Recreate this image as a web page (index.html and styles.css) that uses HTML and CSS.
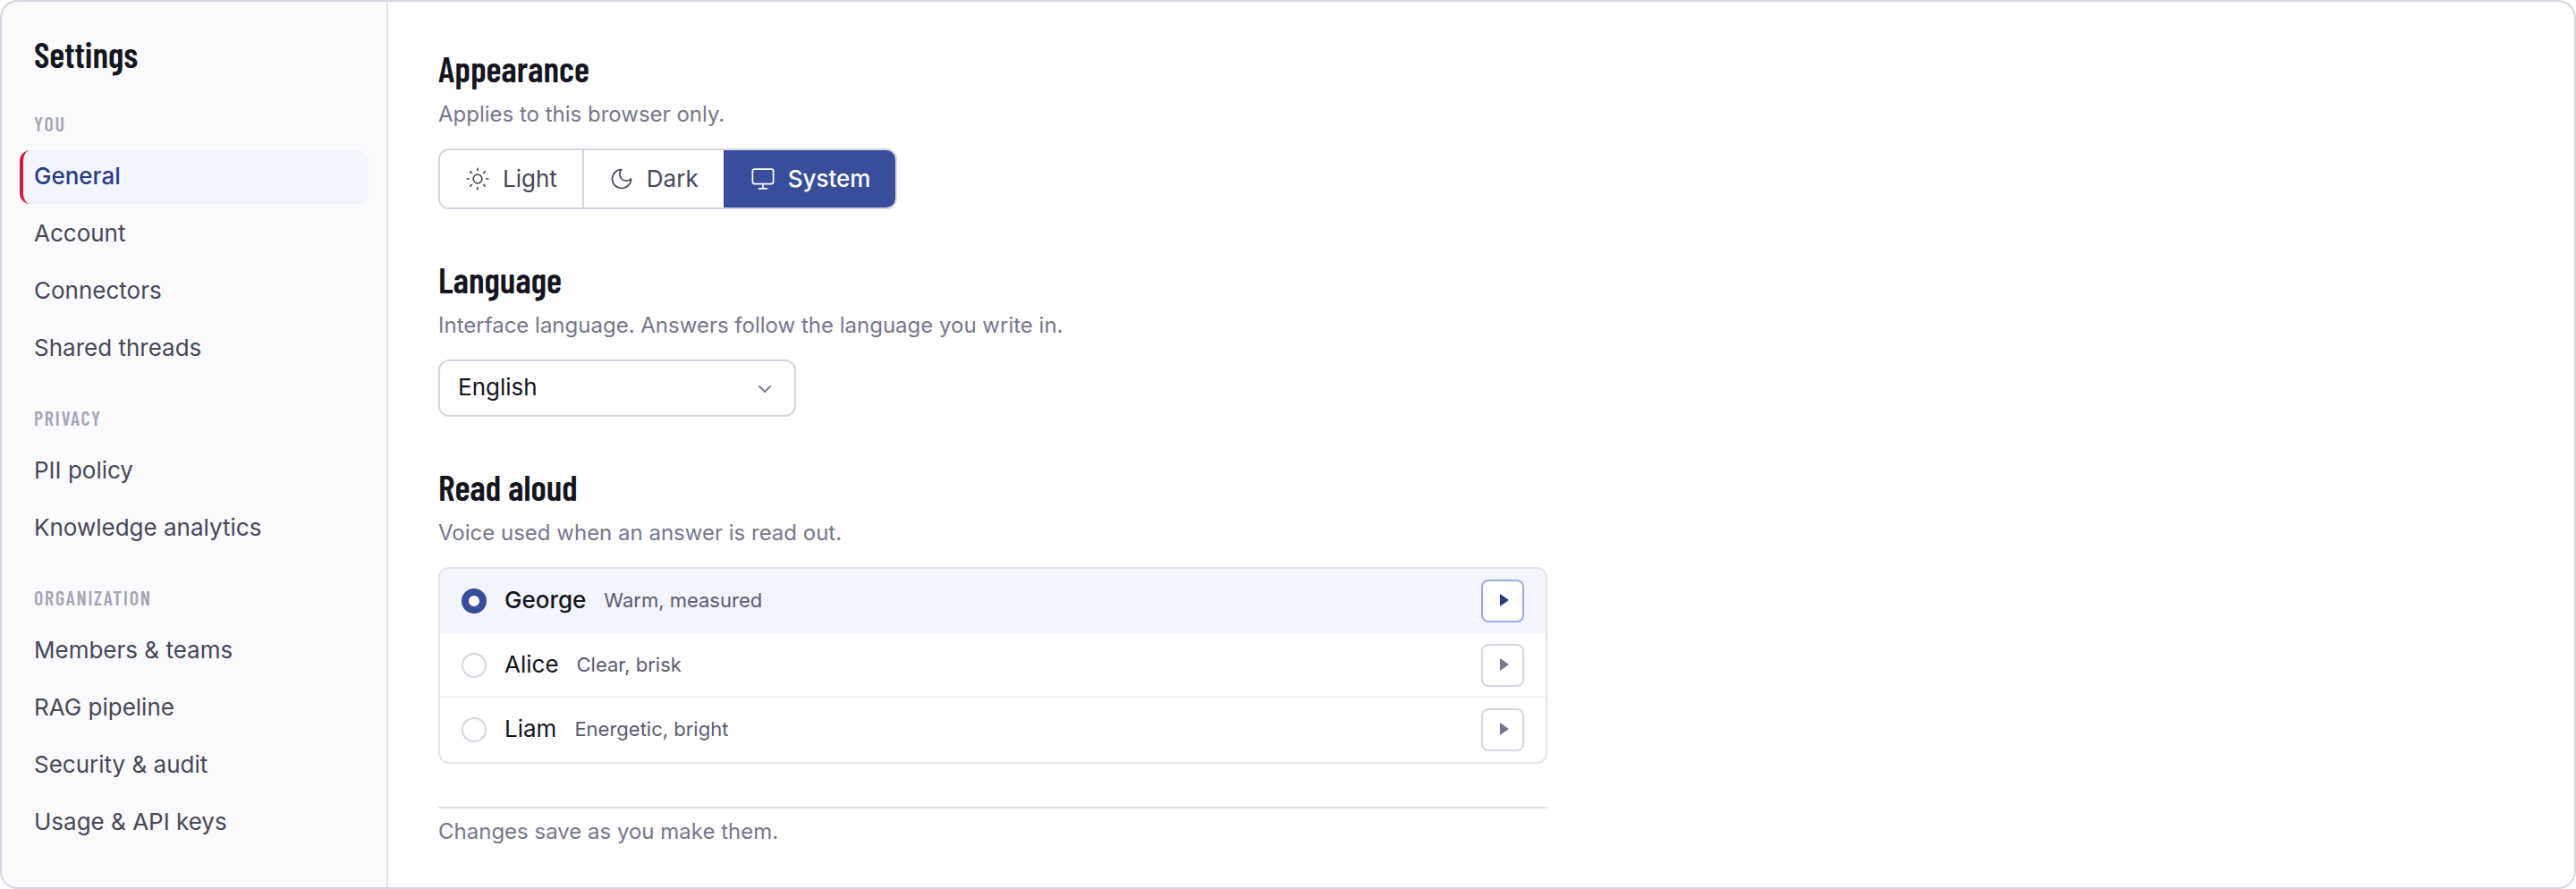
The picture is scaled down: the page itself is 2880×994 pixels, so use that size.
FILE: index.html
```html
<!DOCTYPE html>
<html lang="en">
<head>
<meta charset="utf-8">
<title>Settings</title>
<link rel="stylesheet" href="styles.css">
</head>
<body>
<div class="panel">
  <nav class="sidebar" aria-label="Settings">
    <h1 class="title">Settings</h1>
    <section class="group">
      <h2 class="group-label">YOU</h2>
      <a class="item item-active" href="#general" aria-current="page">General</a>
      <a class="item" href="#account">Account</a>
      <a class="item" href="#connectors">Connectors</a>
      <a class="item" href="#threads">Shared threads</a>
    </section>
    <section class="group">
      <h2 class="group-label">PRIVACY</h2>
      <a class="item" href="#pii">PII policy</a>
      <a class="item" href="#analytics">Knowledge analytics</a>
    </section>
    <section class="group">
      <h2 class="group-label">ORGANIZATION</h2>
      <a class="item" href="#members">Members &amp; teams</a>
      <a class="item" href="#rag">RAG pipeline</a>
      <a class="item" href="#security">Security &amp; audit</a>
      <a class="item" href="#usage">Usage &amp; API keys</a>
    </section>
  </nav>
  <main class="content">
    <section class="block">
      <h2 class="heading">Appearance</h2>
      <p class="hint">Applies to this browser only.</p>
      <div class="segments" role="group" aria-label="Appearance">
        <button class="segment" type="button" aria-pressed="false">
          <svg class="icon" viewBox="0 0 28 28" aria-hidden="true"><circle cx="14" cy="14" r="4.800"/><path d="M14 2.300v2M14 23.700v2M2.300 14h2M23.700 14h2M5.800 5.800l1.500 1.500M20.700 20.700l1.500 1.500M5.800 22.200l1.500-1.500M20.700 7.300l1.500-1.500"/></svg>
          Light
        </button>
        <button class="segment" type="button" aria-pressed="false">
          <svg class="icon" viewBox="0 0 28 28" aria-hidden="true"><path d="M14 3.500a7 7 0 0 0 10.500 10.500 10.500 10.500 0 1 1-10.500-10.500z"/></svg>
          Dark
        </button>
        <button class="segment segment-on" type="button" aria-pressed="true">
          <svg class="icon" viewBox="0 0 28 28" aria-hidden="true"><rect x="2.400" y="3.200" width="23.200" height="16.400" rx="2.300"/><path d="M14 19.600v5.200M9.500 24.800h9"/></svg>
          System
        </button>
      </div>
    </section>
    <section class="block">
      <h2 class="heading"><label for="language">Language</label></h2>
      <p class="hint">Interface language. Answers follow the language you write in.</p>
      <div class="picker">
        <select class="select" id="language"><option>English</option></select>
        <svg class="chevron" viewBox="0 0 24 24" aria-hidden="true"><path d="M5 10l6 6 6-6"/></svg>
      </div>
    </section>
    <section class="block">
      <h2 class="heading">Read aloud</h2>
      <p class="hint">Voice used when an answer is read out.</p>
      <div class="voices" role="radiogroup" aria-label="Read aloud">
        <div class="voice voice-on">
          <input class="radio" type="radio" name="voice" id="george" checked>
          <label class="voice-label" for="george"><span class="name">George</span><span class="note">Warm, measured</span></label>
          <button class="play" type="button" aria-label="Play George"><svg class="play-icon" viewBox="0 0 10 14" aria-hidden="true"><path d="M0 0l10 7L0 14z"/></svg></button>
        </div>
        <div class="voice">
          <input class="radio" type="radio" name="voice" id="alice">
          <label class="voice-label" for="alice"><span class="name">Alice</span><span class="note">Clear, brisk</span></label>
          <button class="play" type="button" aria-label="Play Alice"><svg class="play-icon" viewBox="0 0 10 14" aria-hidden="true"><path d="M0 0l10 7L0 14z"/></svg></button>
        </div>
        <div class="voice">
          <input class="radio" type="radio" name="voice" id="liam">
          <label class="voice-label" for="liam"><span class="name">Liam</span><span class="note">Energetic, bright</span></label>
          <button class="play" type="button" aria-label="Play Liam"><svg class="play-icon" viewBox="0 0 10 14" aria-hidden="true"><path d="M0 0l10 7L0 14z"/></svg></button>
        </div>
      </div>
    </section>
    <footer class="footnote">Changes save as you make them.</footer>
  </main>
</div>
</body>
</html>
```

FILE: styles.css
```css
* { box-sizing: border-box; }

body {
  margin: 0;
  background: #fff;
  color: #14151f;
  font: 26px/36px Inter, "Liberation Sans", sans-serif;
}

h1, h2, p { margin: 0; }

button, select { font: inherit; }

.panel {
  display: flex;
  min-height: 100vh;
  border: 2px solid #d6d5e2;
  border-radius: 20px;
  overflow: hidden;
}

.sidebar {
  flex: none;
  width: 432px;
  padding: 34px 20px;
  border-right: 2px solid #e4e4ed;
  background: #fafbfd;
}

.title, .heading, .group-label {
  font-family: "Barlow Condensed", "Liberation Sans Narrow", Roboto, sans-serif;
  font-weight: 600;
}

.title, .heading {
  font-size: 40px;
  line-height: 48px;
}

.title {
  padding: 0 16px 7px;
}

.group {
  display: flex;
  flex-direction: column;
  gap: 4px;
  margin-top: 33px;
}

.group-label {
  padding-left: 16px;
  margin-bottom: 12px;
  color: #a6a5b8;
  font-size: 22px;
  line-height: 28px;
  letter-spacing: 0.08em;
}

.item {
  padding: 11px 12px 13px;
  border-left: 4px solid transparent;
  border-radius: 12px;
  color: #474659;
  text-decoration: none;
}

.item-active {
  border-left-color: #d01c3f;
  background: #f2f5fd;
  color: #2c3c84;
  font-weight: 500;
}

.content {
  flex: 1;
  padding: 50px 56px 36px;
}

.block {
  max-width: 1240px;
  margin-bottom: 54px;
}

.block:last-of-type { margin-bottom: 48px; }

.hint {
  margin: 10px 0 20px;
  font-size: 24px;
  color: #77768d;
}

.segments {
  display: inline-flex;
  vertical-align: top;
  border: 2px solid #d6d5e2;
  border-radius: 12px;
  overflow: hidden;
}

.segment {
  display: flex;
  align-items: center;
  gap: 14px;
  height: 64px;
  padding: 0 28px;
  border: 0;
  border-left: 2px solid #d6d5e2;
  background: #fff;
  color: #474659;
}

.segment:first-child { border-left: 0; }

.segment-on {
  border-left-color: #394e9b;
  background: #394e9b;
  color: #fff;
  font-weight: 500;
}

.icon {
  width: 28px;
  height: 28px;
  fill: none;
  stroke: currentColor;
  stroke-width: 1.7;
  stroke-linecap: round;
  stroke-linejoin: round;
}

.picker {
  display: grid;
  width: 400px;
  align-items: center;
}

.select, .chevron { grid-area: 1 / 1; }

.select {
  appearance: none;
  width: 100%;
  height: 64px;
  padding: 0 20px 2px;
  border: 2px solid #d6d5e2;
  border-radius: 12px;
  background: #fff;
  color: #14151f;
}

.chevron {
  justify-self: end;
  width: 24px;
  height: 24px;
  margin-right: 22px;
  fill: none;
  stroke: #77768d;
  stroke-width: 1.8;
  stroke-linecap: round;
  stroke-linejoin: round;
  pointer-events: none;
}

.voices {
  border: 2px solid #e4e4ed;
  border-radius: 12px;
  overflow: hidden;
}

.voice {
  display: flex;
  align-items: center;
  gap: 20px;
  padding: 12px 24px 10px;
  border-bottom: 2px solid #f3f3f9;
}

.voice:last-child {
  padding-bottom: 12px;
  border-bottom: 0;
}

.voice-on {
  border-bottom-color: #f2f5fd;
  background: #f2f5fd;
}

.radio {
  appearance: none;
  width: 28px;
  height: 28px;
  margin: 0;
  border: 2px solid #d6d5e2;
  border-radius: 50%;
  background: #fff;
}

.radio:checked { border: 8px solid #394e9b; }

.voice-label {
  display: flex;
  flex: 1;
  align-items: center;
  gap: 20px;
  padding-bottom: 2px;
}

.voice-on .name { font-weight: 500; }

.note {
  font-size: 22px;
  color: #5c5b72;
}

.play {
  display: grid;
  place-items: center;
  width: 48px;
  height: 48px;
  padding: 0 0 2px 4px;
  border: 2px solid #d6d5e2;
  border-radius: 8px;
  background: #fff;
  color: #77768d;
}

.voice-on .play {
  border-color: #9dabe3;
  color: #2c3c84;
}

.play-icon {
  width: 10px;
  height: 14px;
  fill: currentColor;
}

.footnote {
  max-width: 1240px;
  padding-top: 8px;
  border-top: 2px solid #e4e4ed;
  font-size: 24px;
  color: #77768d;
}
```
